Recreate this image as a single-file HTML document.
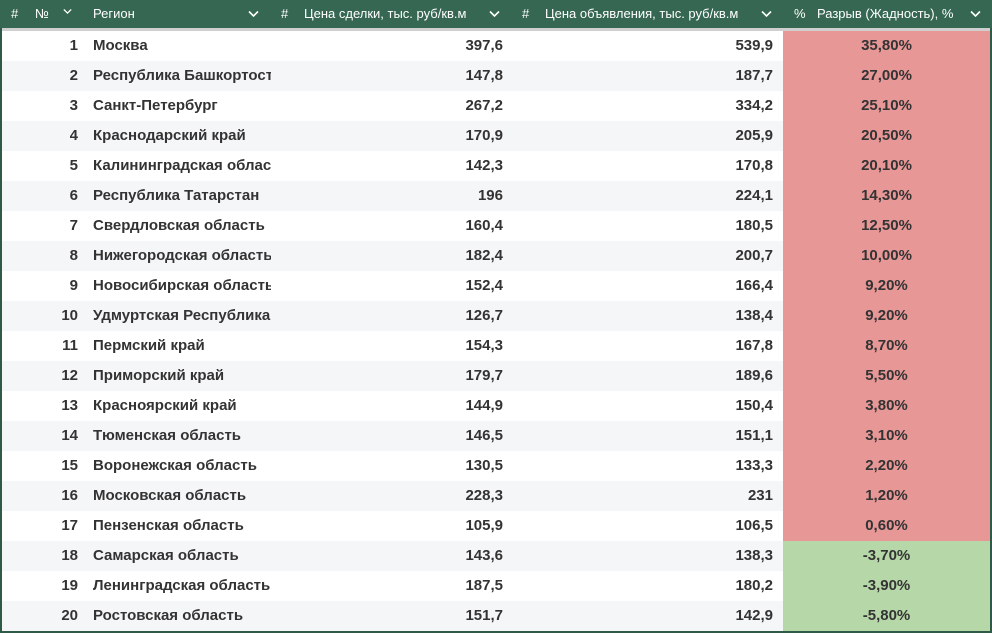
<!DOCTYPE html>
<html><head><meta charset="utf-8"><style>
*{margin:0;padding:0;box-sizing:border-box}
body{width:992px;height:633px;background:#fff;font-family:"Liberation Sans",sans-serif;position:relative;overflow:hidden}
.hd{position:absolute;left:0;top:0;width:992px;height:28px;background:#356752;color:#fff;font-size:13px}
.hd span{position:absolute;top:6px;white-space:nowrap}
.ch{width:9px;height:9px;top:7px!important}
.gap{position:absolute;left:0;top:28px;width:992px;height:3px;background:#cfcfcf}
.frame{position:absolute;left:0;top:28px;width:992px;height:605px;border-left:2px solid #2f5a47;border-right:2px solid #2f5a47;border-bottom:2px solid #2f5a47}
.row{position:absolute;left:2px;width:988px;height:30px;font-size:15px;font-weight:bold;color:#333}
.row div{position:absolute;top:6px;white-space:nowrap;overflow:hidden}
.n{right:912px;text-align:right}
.r{left:91px;width:178px}
.a{right:487px}
.b{right:217px}
.g{left:781px;width:207px;height:30px;top:0!important;text-align:center;line-height:30px}
</style></head><body>
<div class="hd">
<span style="left:11px">#</span><span style="left:35px">№</span>
<svg class="ch" style="position:absolute;left:63px;top:10px" width="11" height="8" viewBox="0 0 11 8"><path d="M1 1.5l4.5 4.5 4.5-4.5" stroke="#fff" stroke-width="1.6" fill="none"/></svg>
<span style="left:93px">Регион</span>
<svg style="position:absolute;left:248px;top:10px" width="11" height="8" viewBox="0 0 11 8"><path d="M1 1.5l4.5 4.5 4.5-4.5" stroke="#fff" stroke-width="1.6" fill="none"/></svg>
<span style="left:281px">#</span><span style="left:304px">Цена сделки, тыс. руб/кв.м</span>
<svg style="position:absolute;left:489px;top:10px" width="11" height="8" viewBox="0 0 11 8"><path d="M1 1.5l4.5 4.5 4.5-4.5" stroke="#fff" stroke-width="1.6" fill="none"/></svg>
<span style="left:522px">#</span><span style="left:545px">Цена объявления, тыс. руб/кв.м</span>
<svg style="position:absolute;left:761px;top:10px" width="11" height="8" viewBox="0 0 11 8"><path d="M1 1.5l4.5 4.5 4.5-4.5" stroke="#fff" stroke-width="1.6" fill="none"/></svg>
<span style="left:794px">%</span><span style="left:817px">Разрыв (Жадность), %</span>
<svg style="position:absolute;left:970px;top:10px" width="11" height="8" viewBox="0 0 11 8"><path d="M1 1.5l4.5 4.5 4.5-4.5" stroke="#fff" stroke-width="1.6" fill="none"/></svg>
</div>
<div class="gap"></div>
<div id="rows"></div>
<div class="frame"></div>
<script>
var d=[["Москва","397,6","539,9","35,80%"],["Республика Башкортостан","147,8","187,7","27,00%"],["Санкт-Петербург","267,2","334,2","25,10%"],["Краснодарский край","170,9","205,9","20,50%"],["Калининградская область","142,3","170,8","20,10%"],["Республика Татарстан","196","224,1","14,30%"],["Свердловская область","160,4","180,5","12,50%"],["Нижегородская область","182,4","200,7","10,00%"],["Новосибирская область","152,4","166,4","9,20%"],["Удмуртская Республика","126,7","138,4","9,20%"],["Пермский край","154,3","167,8","8,70%"],["Приморский край","179,7","189,6","5,50%"],["Красноярский край","144,9","150,4","3,80%"],["Тюменская область","146,5","151,1","3,10%"],["Воронежская область","130,5","133,3","2,20%"],["Московская область","228,3","231","1,20%"],["Пензенская область","105,9","106,5","0,60%"],["Самарская область","143,6","138,3","-3,70%"],["Ленинградская область","187,5","180,2","-3,90%"],["Ростовская область","151,7","142,9","-5,80%"]];
var h="";d.forEach(function(r,i){h+='<div class="row" style="top:'+(31+30*i)+'px;background:'+(i%2?'#f5f6f8':'#fff')+'"><div class="n">'+(i+1)+'</div><div class="r">'+r[0]+'</div><div class="a">'+r[1]+'</div><div class="b">'+r[2]+'</div><div class="g" style="background:'+(i<17?'#e89797':'#b6d8a8')+'">'+r[3]+'</div></div>';});
document.getElementById("rows").innerHTML=h;
</script>
</body></html>
